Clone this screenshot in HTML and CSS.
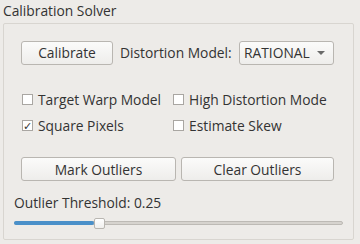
FILE: index.html
```html
<!DOCTYPE html>
<html lang="en">
	<head>
		<meta charset="UTF-8">
		<meta name="viewport" content="width=device-width, initial-scale=1">
		<link rel="stylesheet" href="styles.css">
	</head>

	<body>
		<div class="title">Calibration Solver</div>
		<div class="group">
			<div class="topRow">
				<button class="button buttonCalibrate">Calibrate</button>
				<span class="label">Distortion Model:</span>
				<div class="combo">
					<span>RATIONAL</span>
					<span class="arrow"></span>
				</div>
			</div>

			<div class="checks">
				<label class="check"><span class="box"></span>Target Warp Model</label>
				<label class="check"><span class="box"></span>High Distortion Mode</label>
				<label class="check"><span class="box checked">&#10003;</span>Square Pixels</label>
				<label class="check"><span class="box"></span>Estimate Skew</label>
			</div>

			<div class="outlierRow">
				<button class="button buttonMark">Mark Outliers</button>
				<button class="button buttonClear">Clear Outliers</button>
			</div>

			<div class="thresholdLabel">Outlier Threshold: 0.25</div>
			<div class="slider">
				<div class="groove"></div>
				<div class="fill" style="width: 80px"></div>
				<div class="handle" style="left: 80px"></div>
			</div>
		</div>
	</body>
</html>
```

FILE: styles.css
```css
body {
	margin: 0;
	background-color: #edebe8;
	font-family: "Open Sans", "DejaVu Sans", sans-serif;
	font-size: 13.8px;
	color: #333333;
}

.title {
	padding: 3px 0 0 3px;
	height: 20px;
	line-height: 16px;
}

/*---------------------------GROUP---------------------------*/
.group {
	margin-left: 3px;
	width: 329px;
	height: 215px;
	border: 1px solid #d8d5d0;
	border-radius: 2px;
	padding: 0 10px;
}

.topRow {
	display: flex;
	align-items: center;
	margin: 17px 0 0 7px;
	width: 313px;
	height: 23px;
}

.button {
	font-family: inherit;
	font-size: 13.8px;
	color: #333333;
	background: linear-gradient(#fbfbfa, #eeedeb);
	border: 1px solid #b9b6b1;
	border-radius: 3px;
	padding: 0;
	height: 24px;
	box-sizing: border-box;
}

.buttonCalibrate {
	width: 92px;
}

.label {
	margin-left: 7px;
}

.combo {
	margin-left: auto;
	width: 95px;
	height: 24px;
	box-sizing: border-box;
	background: linear-gradient(#fbfbfa, #eeedeb);
	border: 1px solid #b9b6b1;
	border-radius: 3px;
	display: flex;
	align-items: center;
	justify-content: space-between;
	padding: 0 8px 0 4px;
}

.arrow {
	width: 0;
	height: 0;
	border-left: 4px solid transparent;
	border-right: 4px solid transparent;
	border-top: 4px solid #6a6a6a;
}

/*---------------------------CHECKS---------------------------*/
.checks {
	display: grid;
	grid-template-columns: 151px auto;
	row-gap: 10px;
	margin: 27px 0 0 8px;
}

.check {
	display: flex;
	align-items: center;
	height: 16px;
}

.box {
	width: 11px;
	height: 11px;
	box-sizing: border-box;
	border: 1px solid #a9a6a2;
	background-color: #ffffff;
	margin-right: 5px;
	font-size: 11px;
	line-height: 9px;
	text-align: center;
	color: #333333;
}

.box.checked {
	font-weight: bold;
}

/*---------------------------OUTLIERS---------------------------*/
.outlierRow {
	display: flex;
	gap: 5px;
	margin: 24px 0 0 7px;
}

.buttonMark {
	width: 155px;
}

.buttonClear {
	width: 153px;
}

.thresholdLabel {
	margin-top: 14px;
	line-height: 16px;
}

.slider {
	position: relative;
	margin-top: 7px;
	height: 11px;
	width: 329px;
}

.groove {
	position: absolute;
	left: 0;
	right: 0;
	top: 3px;
	height: 4px;
	border-radius: 2px;
	background-color: #d6d3ce;
	border: 1px solid #bdbab5;
	box-sizing: border-box;
}

.fill {
	position: absolute;
	left: 0;
	top: 3px;
	height: 4px;
	border-radius: 2px;
	background-color: #4a90c9;
}

.handle {
	position: absolute;
	top: 0;
	width: 11px;
	height: 11px;
	box-sizing: border-box;
	border: 1px solid #b9b6b1;
	border-radius: 2px;
	background: linear-gradient(#ffffff, #f0efed);
}
```
